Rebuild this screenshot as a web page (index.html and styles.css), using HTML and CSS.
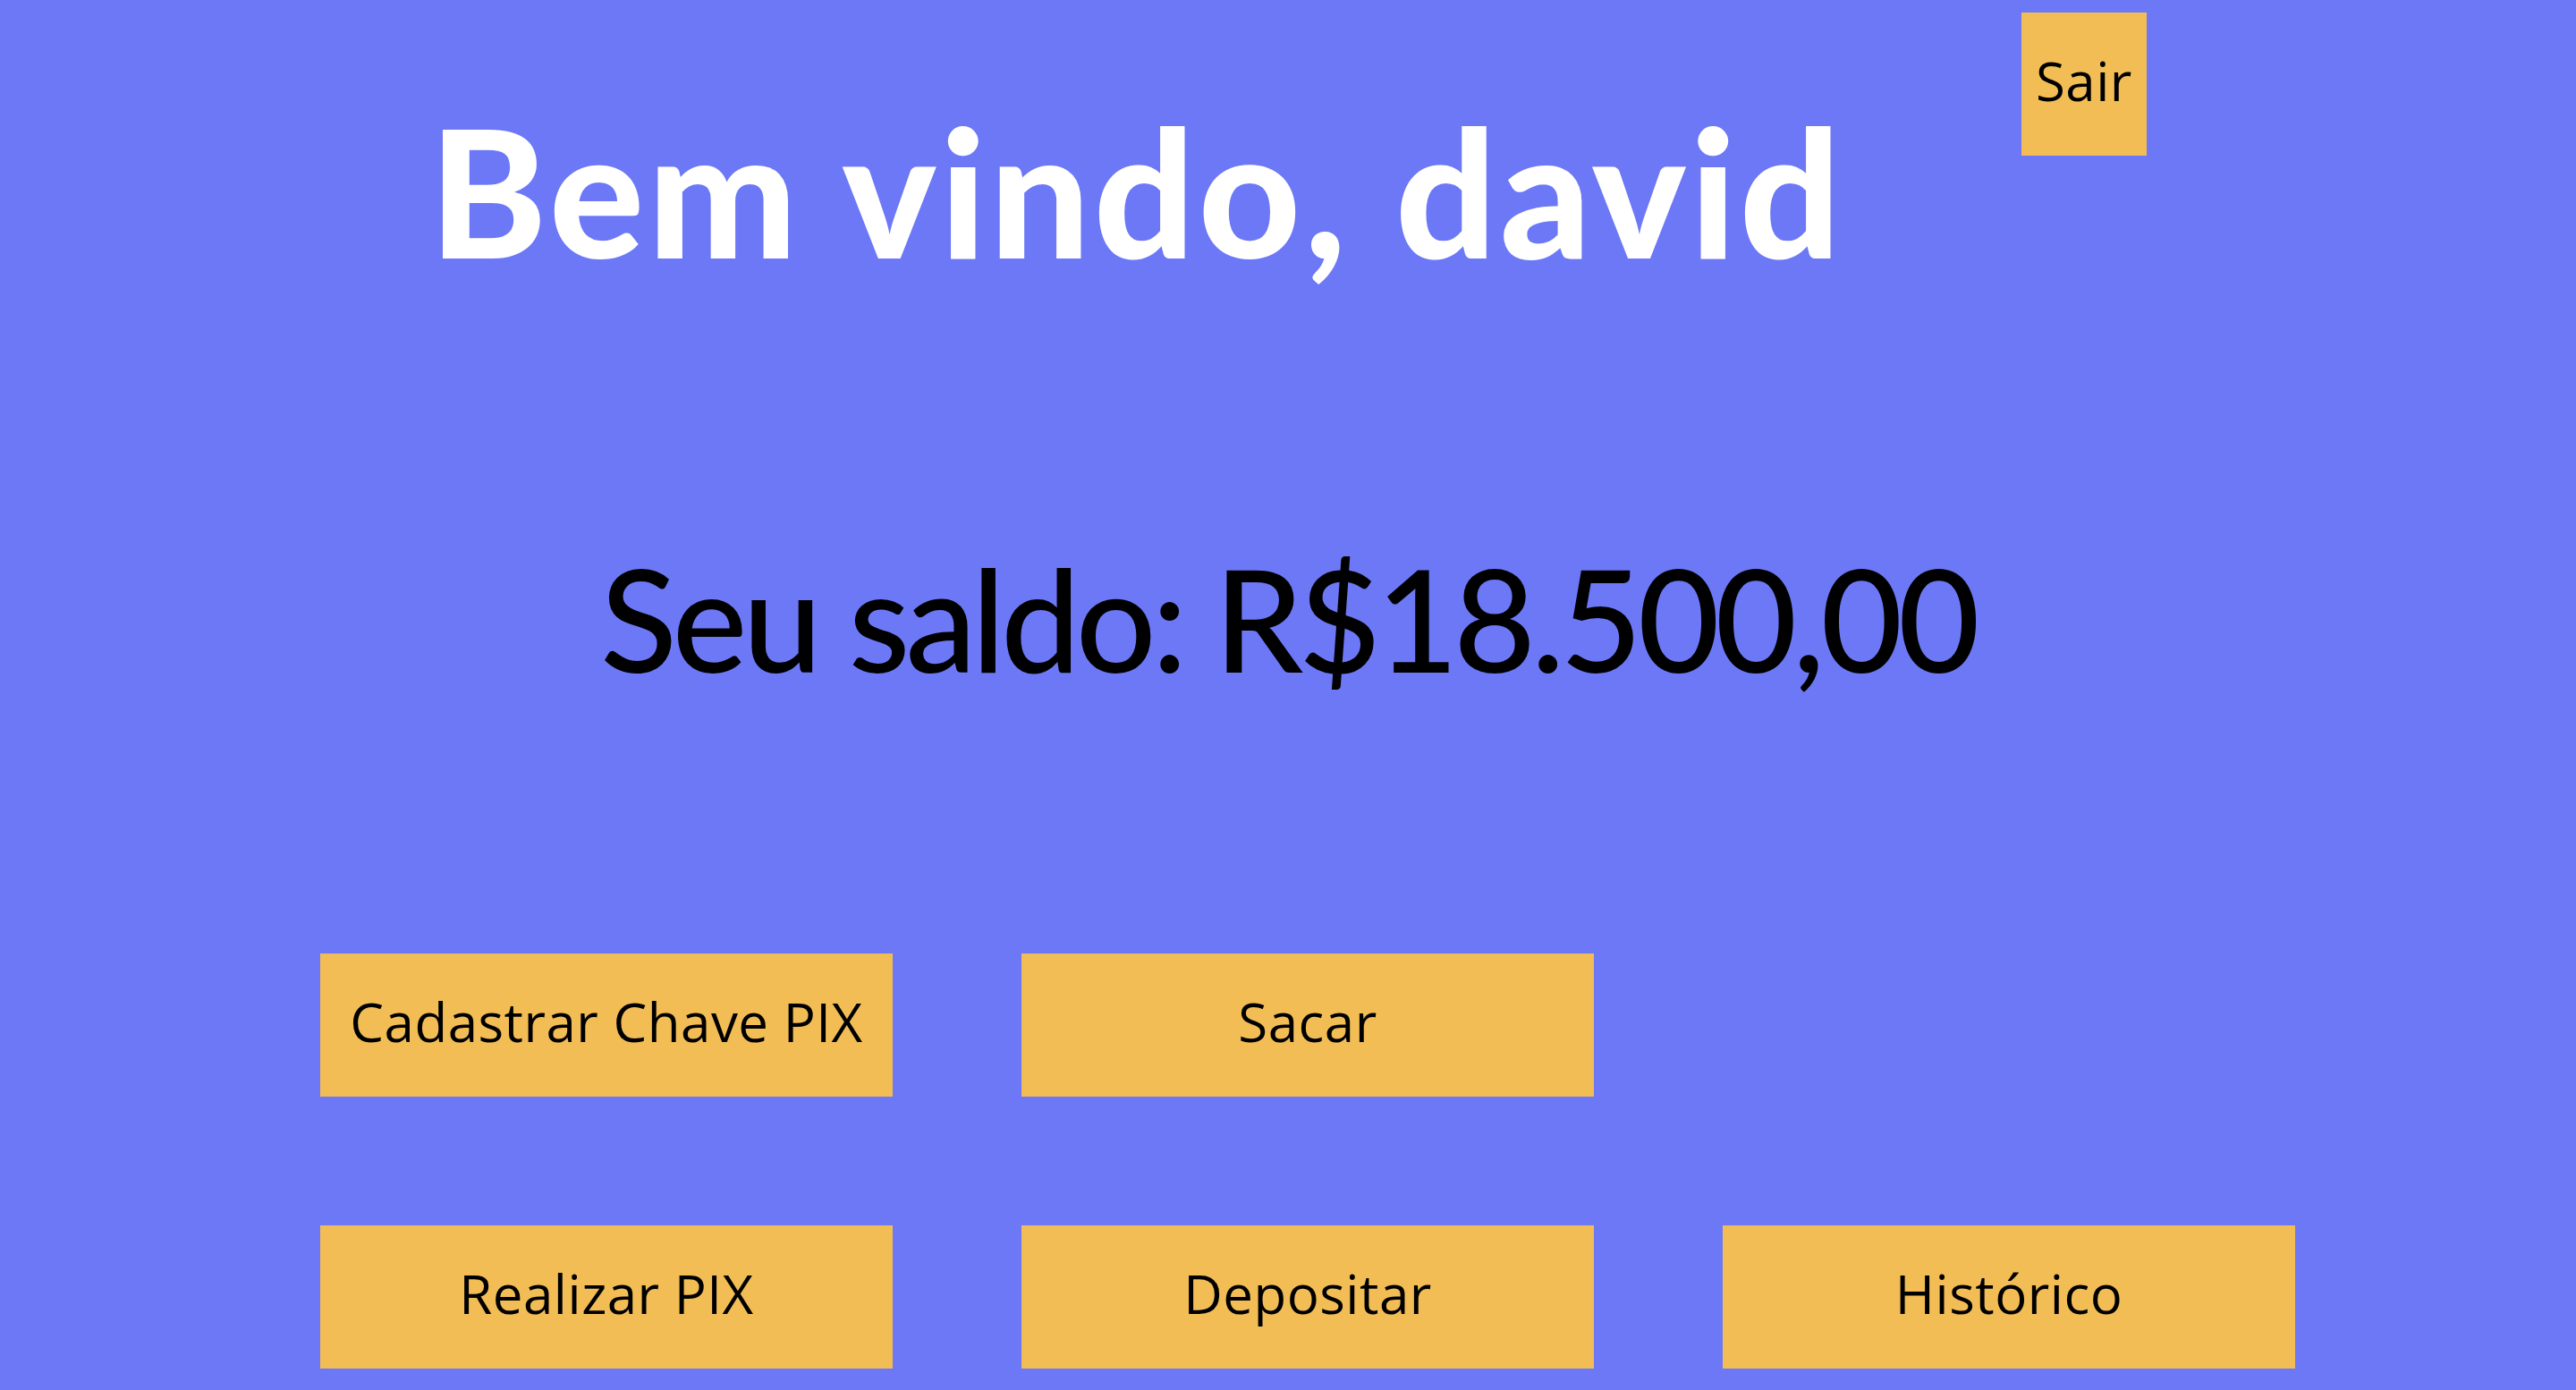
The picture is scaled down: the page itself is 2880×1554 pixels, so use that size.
FILE: index.html
```html
<!DOCTYPE html>
<html lang="pt-BR">
<head>
<meta charset="utf-8">
<title>Banco</title>
<link rel="stylesheet" href="styles.css">
</head>
<body>
<main class="page">
  <header class="top">
    <h1 class="welcome">Bem vindo, david</h1>
    <button class="btn btn-exit">Sair</button>
  </header>
  <section class="balance">
    <h2 class="balance-text">Seu saldo: R$18.500,00</h2>
  </section>
  <section class="actions">
    <button class="btn btn-action">Cadastrar Chave PIX</button>
    <button class="btn btn-action">Sacar</button>
    <div class="empty"></div>
    <button class="btn btn-action">Realizar PIX</button>
    <button class="btn btn-action">Depositar</button>
    <button class="btn btn-action">Histórico</button>
  </section>
</main>
</body>
</html>
```

FILE: styles.css
```css
html, body {
  margin: 0;
  padding: 0;
  background: #6c78f6;
  height: 100%;
}
.page {
  width: 2880px;
  height: 1554px;
  overflow: hidden;
  display: flex;
  flex-direction: column;
}
.top {
  display: flex;
  justify-content: center;
  align-items: flex-start;
  gap: 198px;
  padding-top: 14px;
}
.welcome {
  margin: 0;
  margin-top: 100px;
  font-family: "Lato", sans-serif;
  font-weight: 900;
  font-size: 198px;
  letter-spacing: 4px;
  line-height: 1;
  color: #ffffff;
}
.btn {
  border: none;
  border-radius: 0;
  background: #f2bd55;
  color: #000;
  font-family: "Open Sans", sans-serif;
  font-size: 60px;
  letter-spacing: 0.5px;
  padding: 0 0 8px 0;
  cursor: pointer;
}
.btn-exit {
  width: 140px;
  height: 160px;
}
.balance {
  display: flex;
  justify-content: center;
  margin-top: 300px;
}
.balance-text {
  margin: 0;
  font-family: "Lato", sans-serif;
  font-weight: 500;
  font-size: 158px;
  letter-spacing: -5px;
  line-height: 1;
  color: #000;
}
.actions {
  display: grid;
  grid-template-columns: repeat(3, 640px);
  grid-auto-rows: 160px;
  gap: 144px;
  margin-top: 296px;
  margin-left: 358px;
}
.btn-action {
  width: 640px;
  height: 160px;
}
```
